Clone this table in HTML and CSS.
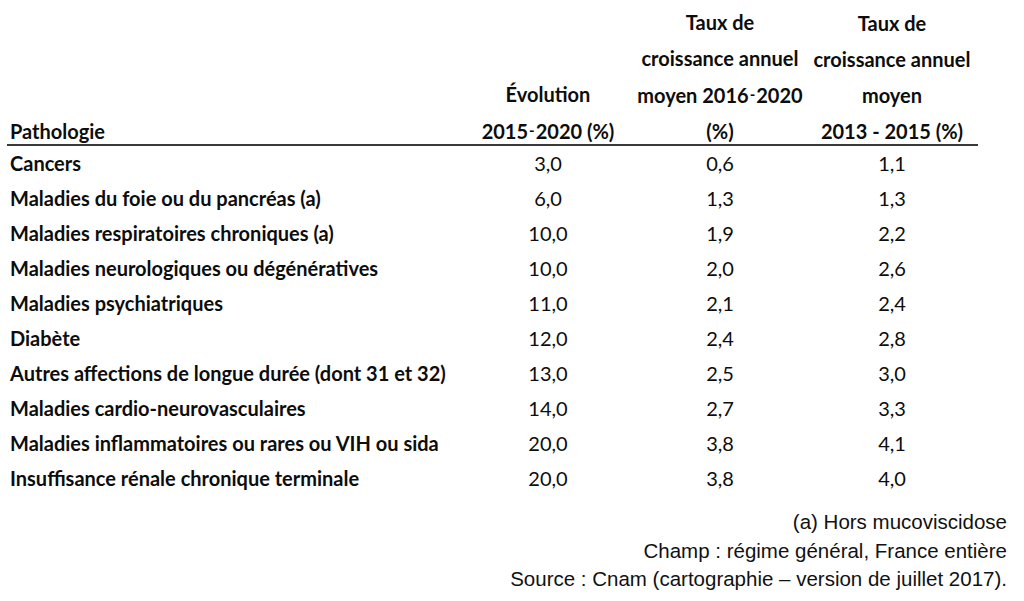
FILE: index.html
```html
<!DOCTYPE html>
<html lang="fr">
<head>
<meta charset="utf-8">
<title>Pathologies</title>
<link rel="stylesheet" href="styles.css">
</head>
<body>
<div class="page">
  <table class="data">
    <colgroup>
      <col class="c-name"><col class="c-num"><col class="c-num"><col class="c-num">
    </colgroup>
    <thead>
      <tr>
        <th class="name"><div class="hd">Pathologie</div></th>
        <th><div class="hd">Évolution<br>2015<span class="hy">-</span>2020 (%)</div></th>
        <th><div class="hd">Taux de<br>croissance annuel<br>moyen 2016<span class="hy">-</span>2020<br>(%)</div></th>
        <th><div class="hd">Taux de<br>croissance annuel<br>moyen<br>2013 - 2015 (%)</div></th>
      </tr>
    </thead>
    <tbody>
      <tr><td class="name">Cancers</td><td>3,0</td><td>0,6</td><td>1,1</td></tr>
      <tr><td class="name">Maladies du foie ou du pancréas (a)</td><td>6,0</td><td>1,3</td><td>1,3</td></tr>
      <tr><td class="name">Maladies respiratoires chroniques (a)</td><td>10,0</td><td>1,9</td><td>2,2</td></tr>
      <tr><td class="name">Maladies neurologiques ou dégénératives</td><td>10,0</td><td>2,0</td><td>2,6</td></tr>
      <tr><td class="name">Maladies psychiatriques</td><td>11,0</td><td>2,1</td><td>2,4</td></tr>
      <tr><td class="name">Diabète</td><td>12,0</td><td>2,4</td><td>2,8</td></tr>
      <tr><td class="name">Autres affections de longue durée (dont 31 et 32)</td><td>13,0</td><td>2,5</td><td>3,0</td></tr>
      <tr><td class="name">Maladies cardio-neurovasculaires</td><td>14,0</td><td>2,7</td><td>3,3</td></tr>
      <tr><td class="name">Maladies inflammatoires ou rares ou VIH ou sida</td><td>20,0</td><td>3,8</td><td>4,1</td></tr>
      <tr><td class="name">Insuffisance rénale chronique terminale</td><td>20,0</td><td>3,8</td><td>4,0</td></tr>
    </tbody>
  </table>
  <div class="notes">
    <p>(a) Hors mucoviscidose</p>
    <p>Champ : régime général, France entière</p>
    <p>Source : Cnam (cartographie – version de juillet 2017).</p>
  </div>
</div>
</body>
</html>
```

FILE: styles.css
```css
html, body {
  margin: 0;
  padding: 0;
  background: #ffffff;
}

.page {
  width: 1024px;
  padding: 0 17px 0 7px;
  box-sizing: border-box;
}

.data {
  border-collapse: collapse;
  table-layout: fixed;
  width: 971px;
  font-family: "Lato", "Open Sans", sans-serif;
  font-weight: 700;
  font-size: 20px;
  color: #0d0d0d;
}

.c-name { width: 455px; }
.c-num { width: 172px; }

.data th {
  font-weight: 700;
  text-align: center;
  vertical-align: bottom;
  padding: 0;
  line-height: 36px;
  height: 144px;
  border-bottom: 2px solid #3a3a3a;
  white-space: nowrap;
}

.data th.name,
.data td.name {
  text-align: left;
  padding-left: 3px;
  font-weight: 700;
}

.hd {
  margin-bottom: -5px;
}

.hy {
  display: inline-block;
  vertical-align: 3px;
  font-size: 15px;
  padding: 0 1px;
}

.data td {
  padding: 0;
  height: 35px;
  line-height: 35px;
  text-align: center;
  white-space: nowrap;
  font-weight: 400;
}

.notes {
  margin-top: 12px;
  text-align: right;
  font-family: "Liberation Sans", Arial, sans-serif;
  font-size: 20.5px;
  line-height: 28.5px;
  color: #111111;
}

.notes p {
  margin: 0;
}
```
